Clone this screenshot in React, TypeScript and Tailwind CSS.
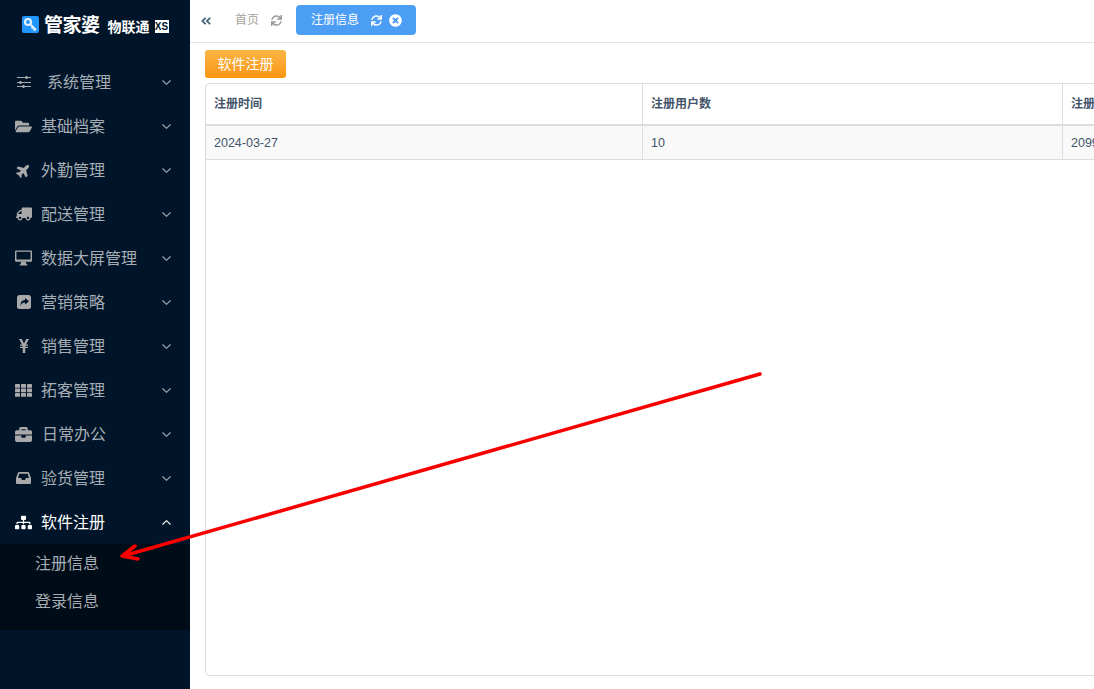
import type { ReactNode } from 'react';
import {
  FaAngleDoubleLeft,
  FaBriefcase,
  FaFolderOpen,
  FaPlane,
  FaSitemap,
  FaSync,
  FaTimesCircle,
  FaTruck,
} from 'react-icons/fa';

function SlidersIcon() {
  return (
    <svg width="16" height="14" viewBox="0 0 16 14" fill="none" stroke="currentColor" strokeWidth="1">
      <path d="M1 2.500h14M1 7.500h14M1 11.500h14" />
      <path d="M10.500 1v3M4.500 6v3M7.500 10v3" strokeWidth="2" />
    </svg>
  );
}

function DesktopIcon() {
  return (
    <svg width="18" height="16" viewBox="0 0 18 16" fill="currentColor">
      <path fillRule="evenodd" d="M1.200 0h15.600A1.200 1.200 0 0118 1.200v9.600a1.200 1.200 0 01-1.200 1.200H1.200A1.200 1.200 0 010 10.800V1.200A1.200 1.200 0 011.200 0zM1.500 1.500V9.500h15V1.500z" />
      <path d="M6.500 12h5l.5 2.500h1V16H5v-1.500h1z" />
    </svg>
  );
}

function ShareIcon() {
  return (
    <svg width="14" height="14" viewBox="0 0 14 14">
      <rect width="14" height="14" rx="2.500" fill="currentColor" />
      <path d="M8 3l4 3.200L8 9.500V7.600C6 7.600 4.400 8.400 3.600 11 3.200 7.400 5 5 8 4.900z" fill="#001529" />
    </svg>
  );
}

function YenIcon() {
  return (
    <svg width="10" height="14" viewBox="0 0 10 14" fill="currentColor">
      <path d="M0 0h2.800L5 4.600 7.200 0H10L7 5.600h2v1.200H6.300v1H9V9H6.300v5H3.700V9H1V7.800h2.700v-1H1V5.600h2z" />
    </svg>
  );
}

function GridIcon() {
  return (
    <svg width="17" height="13" viewBox="0 0 17 13" fill="currentColor">
      {[0, 4.5, 9].map((y) =>
        [0, 6, 12].map((x) => <rect key={`${x}-${y}`} x={x} y={y} width="5" height="3.800" rx="0.4" />),
      )}
    </svg>
  );
}

function InboxIcon() {
  return (
    <svg width="15" height="12" viewBox="0 0 15 12">
      <path d="M3 0h9a1 1 0 01.9.6L15 6v5a1 1 0 01-1 1H1a1 1 0 01-1-1V6L2.100.6A1 1 0 013 0z" fill="currentColor" />
      <path d="M3.300 1.800h8.400L13 6h-3L9 8H6L5 6H2z" fill="#001529" />
    </svg>
  );
}

function Chevron({ up }: { up?: boolean }) {
  return (
    <svg width="9" height="5" viewBox="0 0 9 5" fill="none" stroke="currentColor" strokeWidth="1.100">
      <path d={up ? 'M.5 4.500L4.500.7l4 3.800' : 'M.5.500l4 3.800 4-3.800'} />
    </svg>
  );
}

const MENU: { label: string; icon: ReactNode; textClass?: string }[] = [
  { label: '系统管理', icon: <SlidersIcon />, textClass: 'ml-[15px]' },
  { label: '基础档案', icon: <FaFolderOpen size={17} /> },
  { label: '外勤管理', icon: <FaPlane size={15} className="-rotate-45" /> },
  { label: '配送管理', icon: <FaTruck size={16} className="-scale-x-100" /> },
  { label: '数据大屏管理', icon: <DesktopIcon /> },
  { label: '营销策略', icon: <ShareIcon /> },
  { label: '销售管理', icon: <YenIcon /> },
  { label: '拓客管理', icon: <GridIcon /> },
  { label: '日常办公', icon: <FaBriefcase size={17} />, textClass: 'ml-[10px]' },
  { label: '验货管理', icon: <InboxIcon /> },
];

function MenuItem({ label, icon, textClass, open }: { label: string; icon: ReactNode; textClass?: string; open?: boolean }) {
  return (
    <div className={`flex h-11 items-center pl-[15px] pr-[19px] ${open ? 'text-white' : 'text-[#a6adb4]'}`}>
      <span className={`flex w-[17px] shrink-0 justify-center ${open ? '' : 'text-[#a9a9a9]'}`}>{icon}</span>
      <span className={`flex-1 pt-[2px] text-[16px] ${textClass ?? 'ml-[9px]'}`}>{label}</span>
      <Chevron up={open} />
    </div>
  );
}

export default function App() {
  return (
    <div
      className="relative flex h-[689px] w-[1094px] overflow-hidden bg-white"
      style={{ fontFamily: '"Liberation Sans", "Noto Sans CJK SC", sans-serif' }}
    >
      {/* Sidebar */}
      <aside className="flex w-[190px] shrink-0 flex-col bg-[#001529]">
        <div className="flex h-[60px] items-start pl-[22px] pt-4 text-white">
          <span className="flex h-[17px] w-[17px] items-center justify-center rounded-[2px] bg-[#2196ff]">
            <svg viewBox="0 0 17 17" className="h-[17px] w-[17px]" fill="none" stroke="#e3f1ff">
              <circle cx="6" cy="6" r="3" strokeWidth="2.200" />
              <path d="M8 8l6 6M11 11l-1.500 1.500M13 13l-1.500 1.500" strokeWidth="1.800" />
            </svg>
          </span>
          <span className="ml-[5px] text-[19px] font-bold leading-[19px] tracking-[-0.5px]">管家婆</span>
          <span className="ml-[8px] mt-[2px] text-[14px] font-bold leading-[18px]">物联通</span>
          <span className="ml-[5px] mt-[4px] flex h-[13px] w-[14px] items-center justify-center bg-white text-[10px] font-bold leading-none text-[#001529]">
            XS
          </span>
        </div>
        {MENU.map((item) => (
          <MenuItem key={item.label} {...item} />
        ))}
        <MenuItem label="软件注册" icon={<FaSitemap size={17} />} open />
        <div className="flex h-[86px] flex-col bg-[#000c17] pl-[35px] text-[16px] text-[#a6adb4]">
          <div className="flex h-[38px] items-center pt-[1px]">注册信息</div>
          <div className="flex h-[39px] items-center">登录信息</div>
        </div>
      </aside>

      {/* Main */}
      <main className="flex min-w-0 flex-1 flex-col">
        <header className="flex h-[43px] shrink-0 items-start border-b border-[#e2e2e2]">
          <FaAngleDoubleLeft size={12} className="ml-[10px] mt-[15px] text-[#4a6c7c]" />
          <span className="ml-[23px] mt-[11px] text-[12px] leading-[18px] text-[#a8a29a]">首页</span>
          <FaSync size={11} className="ml-[12px] mt-[15px] text-[#999]" />
          <div className="ml-[14px] mt-[5px] flex h-[30px] w-[120px] items-center rounded-[4px] bg-[#4c9ef5] pl-[15px] text-white">
            <span className="text-[12px]">注册信息</span>
            <FaSync size={11} className="ml-[12px]" />
            <FaTimesCircle size={13} className="ml-[7px]" />
          </div>
        </header>
        <div className="flex min-h-0 flex-1 flex-col pb-[13px] pl-[15px] pt-[7px]">
          <button className="flex h-[28px] w-[81px] items-center justify-center rounded-[3px] bg-gradient-to-b from-[#fbb544] to-[#fb9508] text-[14px] text-white">
            软件注册
          </button>
          <div className="mt-[5px] flex-1 overflow-hidden rounded-l-[5px] border border-r-0 border-[#dddddd]">
            <div className="grid w-[1000px] grid-cols-[437px_420px_143px] text-[12px] text-[#44546a]">
              <div className="flex h-[42px] items-center border-b-2 border-r border-[#dddddd] pl-2 font-bold">注册时间</div>
              <div className="flex h-[42px] items-center border-b-2 border-r border-[#dddddd] pl-2 font-bold">注册用户数</div>
              <div className="flex h-[42px] items-center border-b-2 border-[#dddddd] pl-2 font-bold">注册到期时间</div>
              <div className="flex h-[34px] items-center border-b border-r border-[#dddddd] bg-[#f9f9f9] pl-2 pt-[1px] text-[12.5px]">2024-03-27</div>
              <div className="flex h-[34px] items-center border-b border-r border-[#dddddd] bg-[#f9f9f9] pl-2 pt-[1px] text-[12.5px]">10</div>
              <div className="flex h-[34px] items-center border-b border-[#dddddd] bg-[#f9f9f9] pl-2 pt-[1px] text-[12.5px]">2099-12-31</div>
            </div>
          </div>
        </div>
      </main>

      {/* Red annotation arrow */}
      <svg className="pointer-events-none absolute inset-0 h-[689px] w-[1094px]" viewBox="0 0 1094 689" fill="none">
        <path d="M760 374L123 556M135 546L122 556L138 559" stroke="#f80000" strokeWidth="3.500" strokeLinecap="round" strokeLinejoin="round" />
      </svg>
    </div>
  );
}
